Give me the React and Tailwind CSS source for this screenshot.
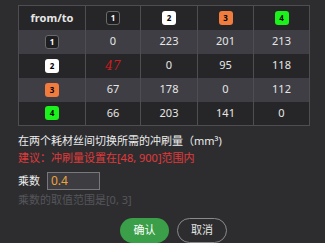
import React from 'react';

const badgeStyles = {
  1: 'bg-[#1f1f21] text-white border border-[#6a6a6a]',
  2: 'bg-white text-black',
  3: 'bg-[#f27c3e] text-black',
  4: 'bg-[#1bf21b] text-black',
};

const Badge = ({ n }) => (
  <span
    className={`inline-flex items-center justify-center w-[14px] h-[14px] rounded-[3px] text-[8px] font-bold leading-none ${badgeStyles[n]}`}
  >
    {n}
  </span>
);

const rows = [
  [0, 223, 201, 213],
  [47, 0, 95, 118],
  [67, 178, 0, 112],
  [66, 203, 141, 0],
];

const App = () => {
  return (
    <div
      className="w-[325px] h-[243px] bg-[#2d2d30] text-[#e6e6e6] pt-[5px]"
      style={{ fontFamily: '"Noto Sans", "Noto Sans CJK SC", sans-serif' }}
    >
      <table className="ml-[18px] w-[291px] border border-[#4d4d52] border-collapse text-[11px] table-fixed">
        <colgroup>
          <col className="w-[67px]" />
          <col className="w-[55px]" />
          <col className="w-[57px]" />
          <col className="w-[56px]" />
          <col className="w-[56px]" />
        </colgroup>
        <thead>
          <tr className="h-[24px] bg-[#262628]">
            <th className="font-bold border-r border-[#4d4d52]">from/to</th>
            {[1, 2, 3, 4].map((n) => (
              <th key={n} className="border-r border-[#4d4d52]">
                <div className="flex justify-center">
                  <Badge n={n} />
                </div>
              </th>
            ))}
          </tr>
        </thead>
        <tbody>
          {rows.map((row, i) => (
            <tr key={i} className={`h-[24px] ${i % 2 === 0 ? 'bg-[#3e3e44]' : 'bg-[#262628]'}`}>
              <td className="border-r border-[#4d4d52]">
                <div className="flex justify-center">
                  <Badge n={i + 1} />
                </div>
              </td>
              {row.map((v, j) => (
                <td
                  key={j}
                  className={`text-center border-r border-[#4d4d52] ${
                    i === 1 && j === 0 ? 'text-[#d01c1c] italic text-[12px]' : ''
                  }`}
                  style={i === 1 && j === 0 ? { fontFamily: '"DejaVu Serif", serif' } : undefined}
                >
                  {v}
                </td>
              ))}
            </tr>
          ))}
        </tbody>
      </table>

      <div className="pl-[18px] mt-[7px] text-[11px] leading-[16px]">
        <div className="text-[#ececec]">在两个耗材丝间切换所需的冲刷量（mm³)</div>
        <div className="text-[#e03a3a] mt-[1px]">建议：冲刷量设置在[48, 900]范围内</div>
        <div className="flex items-center mt-[6px]">
          <span className="text-[#ececec] mr-[7px]">乘数</span>
          <div className="w-[53px] h-[18px] bg-[#3c3c41] border border-[#77777c] text-[#eea43c] text-[12px] px-[3px] leading-[16px]">
            0.4
          </div>
        </div>
        <div className="text-[#55555a] mt-[2px]">乘数的取值范围是[0, 3]</div>
      </div>

      <div className="flex justify-center gap-[8px] mt-[10px] pl-[22px] text-[11px]">
        <button className="w-[49px] h-[25px] rounded-full bg-[#3a9f48] text-white">确认</button>
        <button className="w-[50px] h-[25px] rounded-full border border-[#8a8a8e] text-[#e6e6e6]">
          取消
        </button>
      </div>
    </div>
  );
};

export default App;
